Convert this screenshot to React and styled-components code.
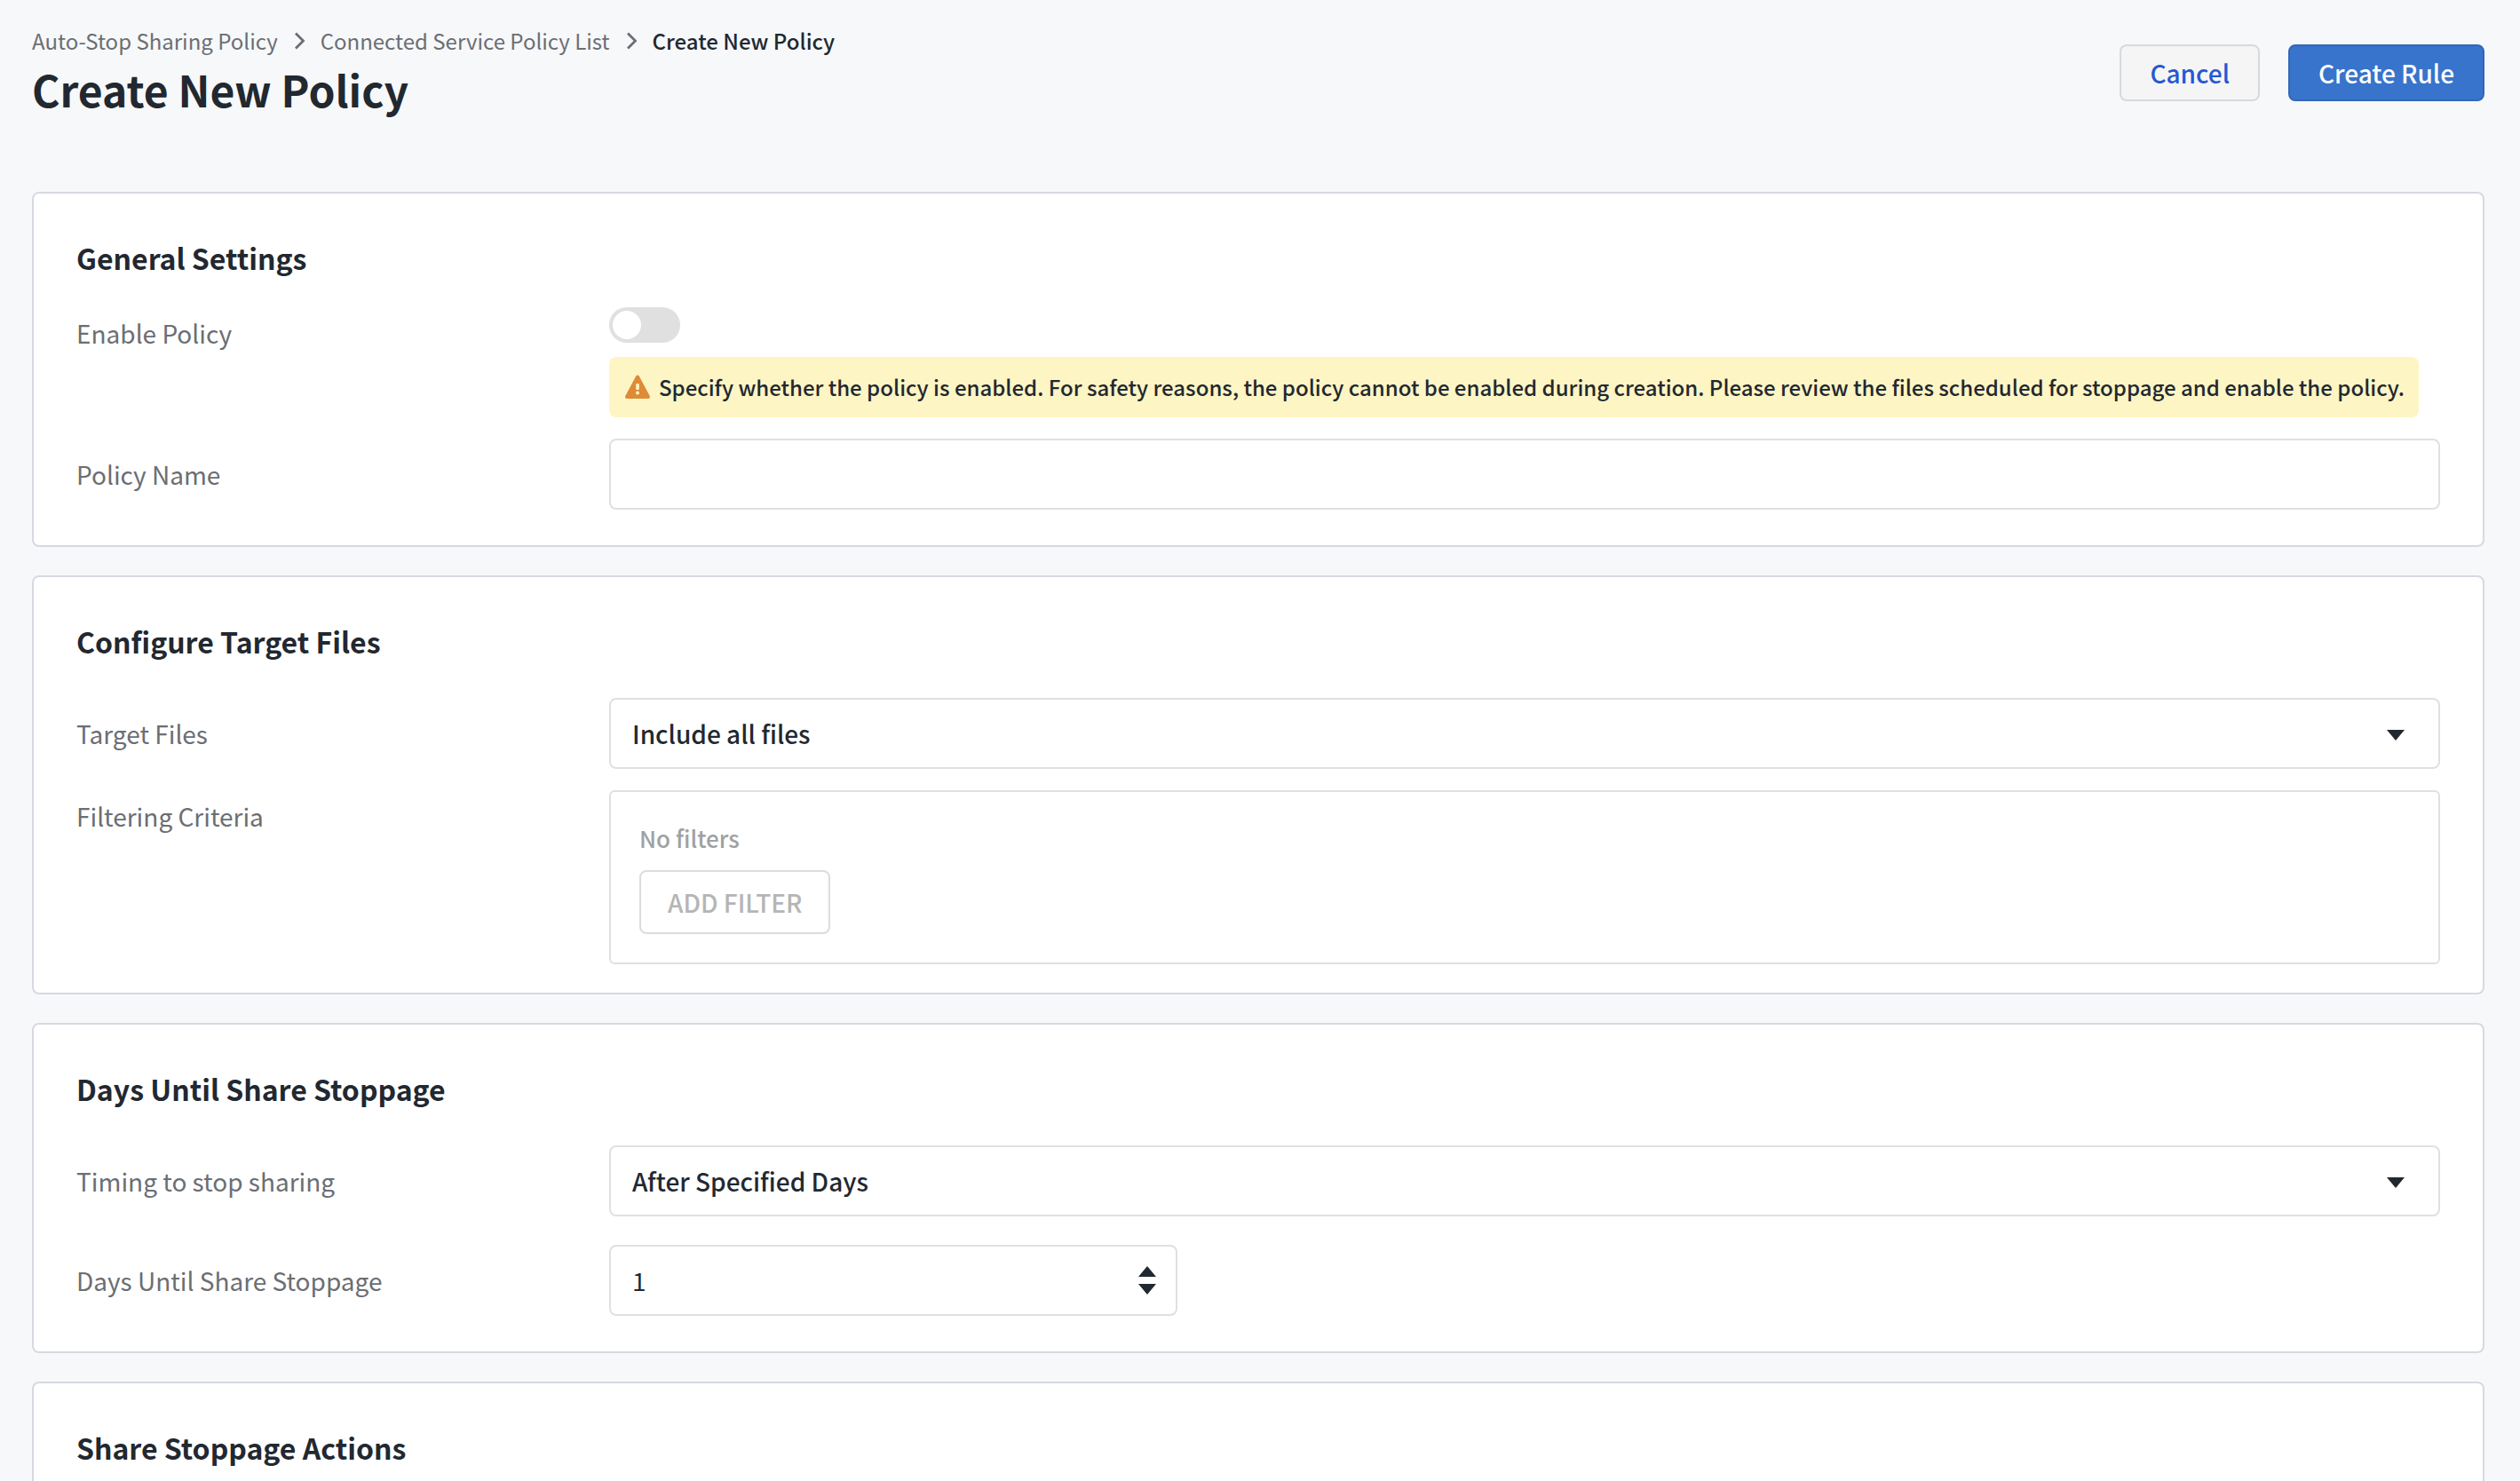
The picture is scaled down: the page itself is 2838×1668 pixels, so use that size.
import { useState } from "react";
import styled, { createGlobalStyle } from "styled-components";

const colors = {
  page: "#f7f8fa",
  panel: "#ffffff",
  panelBorder: "#d7d9e2",
  fieldBorder: "#e0e0e0",
  text: "#222830",
  label: "#6b6e73",
  muted: "#a0a1a3",
  disabled: "#b5b5b5",
  primary: "#3874cb",
  primaryBorder: "#3267b5",
  link: "#2458d3",
  notice: "#fef5c4",
  warning: "#dd8b37",
};

const GlobalStyle = createGlobalStyle`
  *, *::before, *::after {
    box-sizing: border-box;
  }

  body {
    margin: 0;
    background-color: ${colors.page};
    color: ${colors.text};
    font-family: "Noto Sans CJK JP", "Noto Sans", sans-serif;
    font-size: 28px;
    line-height: 40px;
  }

  button, input, select {
    font: inherit;
    color: inherit;
  }
`;

const Page = styled.div`
  padding: 28px 40px 40px 36px;
`;

const PageHeader = styled.header`
  display: flex;
  justify-content: space-between;
  align-items: flex-start;
  min-height: 188px;
`;

const Breadcrumb = styled.nav`
  display: flex;
  align-items: center;
  gap: 14px;
  font-size: 24px;
  line-height: 36px;
`;

const Crumb = styled.a`
  color: ${colors.label};
  text-decoration: none;
`;

const CurrentCrumb = styled.span`
  font-weight: 500;
`;

const PageTitle = styled.h1`
  margin: 0;
  font-size: 48px;
  line-height: 72px;
  font-weight: 700;
`;

const HeaderActions = styled.div`
  display: flex;
  gap: 32px;
  padding-top: 22px;
`;

const Button = styled.button`
  height: 64px;
  padding: 0 32px;
  border: 2px solid
    ${(props) => (props.$primary ? colors.primaryBorder : "#d9d9d9")};
  border-radius: 8px;
  background-color: ${(props) => (props.$primary ? colors.primary : "#f5f5f5")};
  color: ${(props) => (props.$primary ? "#ffffff" : colors.link)};
  font-weight: 500;
  cursor: pointer;
`;

const Panels = styled.main`
  display: flex;
  flex-direction: column;
  gap: 32px;
`;

const Panel = styled.section`
  padding: 48px 48px ${(props) => (props.$compact ? 32 : 40)}px;
  border: 2px solid ${colors.panelBorder};
  border-radius: 8px;
  background-color: ${colors.panel};
`;

const PanelTitle = styled.h2`
  margin: 0 0 ${(props) => (props.$compact ? 32 : 40)}px;
  font-size: 32px;
  line-height: 48px;
  font-weight: 700;
`;

const Rows = styled.div`
  display: flex;
  flex-direction: column;
  gap: ${(props) => (props.$wide ? 32 : 24)}px;
`;

const Row = styled.div`
  display: grid;
  grid-template-columns: 600px minmax(0, 1fr);
  align-items: ${(props) => (props.$top ? "start" : "center")};
`;

const Label = styled.label`
  padding-top: ${(props) => (props.$top ? 9 : 0)}px;
  color: ${colors.label};
`;

const ToggleCell = styled.div`
  display: flex;
  flex-direction: column;
  align-items: flex-start;
  gap: 16px;
`;

const Toggle = styled.input`
  appearance: none;
  display: flex;
  width: 80px;
  height: 40px;
  margin: 0;
  padding: 4px;
  border-radius: 20px;
  background-color: ${colors.fieldBorder};

  &::before {
    content: "";
    width: 32px;
    height: 32px;
    border-radius: 50%;
    background-color: #ffffff;
  }
`;

const Notice = styled.p`
  display: flex;
  align-items: center;
  gap: 8px;
  margin: 0;
  padding: 16px;
  border-radius: 8px;
  background-color: ${colors.notice};
  font-size: 24px;
  line-height: 36px;
  font-weight: 500;
`;

const TextInput = styled.input`
  width: 100%;
  height: 80px;
  padding: 0 24px;
  border: 2px solid ${colors.fieldBorder};
  border-radius: 8px;
  background-color: #ffffff;
`;

const SelectBox = styled.div`
  position: relative;
`;

const SelectInput = styled.select`
  appearance: none;
  display: block;
  width: 100%;
  height: 80px;
  padding: 0 80px 0 24px;
  border: 2px solid ${colors.fieldBorder};
  border-radius: 8px;
  background-color: #ffffff;
  font-weight: 500;
`;

const SelectCaret = styled.svg`
  position: absolute;
  top: 36px;
  right: 40px;
  pointer-events: none;
`;

const NumberBox = styled.div`
  display: flex;
  align-items: center;
  width: 640px;
  height: 80px;
  padding: 0 22px 0 24px;
  border: 2px solid ${colors.fieldBorder};
  border-radius: 8px;
`;

const NumberInput = styled.input`
  appearance: textfield;
  flex: 1;
  min-width: 0;
  padding: 0;
  border: 0;
  outline: 0;
  background: none;

  &::-webkit-inner-spin-button {
    appearance: none;
  }
`;

const Stepper = styled.div`
  display: flex;
  flex-direction: column;
  gap: 8px;
`;

const StepButton = styled.button`
  display: block;
  padding: 0;
  border: 0;
  background: none;
  line-height: 0;
  cursor: pointer;
`;

const FilterBox = styled.div`
  display: flex;
  flex-direction: column;
  align-items: flex-start;
  gap: 16px;
  padding: 32px;
  border: 2px solid ${colors.fieldBorder};
  border-radius: 6px;
`;

const FilterEmpty = styled.span`
  color: ${colors.muted};
  font-size: 26px;
  font-weight: 500;
`;

const FilterButton = styled.button`
  height: 72px;
  padding: 0 30px;
  border: 2px solid #dcdcdc;
  border-radius: 8px;
  background-color: #ffffff;
  font-weight: 500;

  &:disabled {
    color: ${colors.disabled};
  }
`;

const Chevron = () => (
  <svg width="20" height="20" viewBox="0 0 20 20" fill="none">
    <path d="M6 1.5L14.5 10L6 18.5" stroke={colors.label} strokeWidth="2.8" />
  </svg>
);

const WarningIcon = () => (
  <svg width="32" height="32" viewBox="0 0 32 32">
    <path
      d="M16 4.5L28 27H4Z"
      fill={colors.warning}
      stroke={colors.warning}
      strokeWidth="4"
      strokeLinejoin="round"
    />
    <rect x="14.2" y="12" width="3.6" height="7" rx="1" fill={colors.notice} />
    <circle cx="16" cy="22.4" r="2" fill={colors.notice} />
  </svg>
);

const TriangleUp = () => (
  <svg width="20" height="12" viewBox="0 0 20 12">
    <path d="M0 12L10 0L20 12Z" fill={colors.text} />
  </svg>
);

const TriangleDown = () => (
  <svg width="20" height="12" viewBox="0 0 20 12">
    <path d="M0 0L10 12L20 0Z" fill={colors.text} />
  </svg>
);

const Select = ({ id, options }) => (
  <SelectBox>
    <SelectInput id={id}>
      {options.map((option) => (
        <option key={option}>{option}</option>
      ))}
    </SelectInput>
    <SelectCaret width="20" height="12" viewBox="0 0 20 12">
      <path d="M0 0L10 12L20 0Z" fill={colors.text} />
    </SelectCaret>
  </SelectBox>
);

export default function App() {
  const [name, setName] = useState("");
  const [days, setDays] = useState(1);

  return (
    <>
      <GlobalStyle />
      <Page>
        <PageHeader>
          <div>
            <Breadcrumb>
              <Crumb href="#policy">Auto-Stop Sharing Policy</Crumb>
              <Chevron />
              <Crumb href="#list">Connected Service Policy List</Crumb>
              <Chevron />
              <CurrentCrumb>Create New Policy</CurrentCrumb>
            </Breadcrumb>
            <PageTitle>Create New Policy</PageTitle>
          </div>
          <HeaderActions>
            <Button type="button">Cancel</Button>
            <Button type="button" $primary>
              Create Rule
            </Button>
          </HeaderActions>
        </PageHeader>

        <Panels>
          <Panel>
            <PanelTitle $compact>General Settings</PanelTitle>
            <Rows>
              <Row $top>
                <Label $top htmlFor="enable">
                  Enable Policy
                </Label>
                <ToggleCell>
                  <Toggle id="enable" type="checkbox" role="switch" disabled />
                  <Notice>
                    <WarningIcon />
                    Specify whether the policy is enabled. For safety reasons,
                    the policy cannot be enabled during creation. Please review
                    the files scheduled for stoppage and enable the policy.
                  </Notice>
                </ToggleCell>
              </Row>
              <Row>
                <Label htmlFor="name">Policy Name</Label>
                <TextInput
                  id="name"
                  type="text"
                  value={name}
                  onChange={(e) => setName(e.target.value)}
                />
              </Row>
            </Rows>
          </Panel>

          <Panel $compact>
            <PanelTitle>Configure Target Files</PanelTitle>
            <Rows>
              <Row>
                <Label htmlFor="target">Target Files</Label>
                <Select id="target" options={["Include all files"]} />
              </Row>
              <Row $top>
                <Label $top htmlFor="filter">
                  Filtering Criteria
                </Label>
                <FilterBox>
                  <FilterEmpty>No filters</FilterEmpty>
                  <FilterButton id="filter" type="button" disabled>
                    ADD FILTER
                  </FilterButton>
                </FilterBox>
              </Row>
            </Rows>
          </Panel>

          <Panel>
            <PanelTitle>Days Until Share Stoppage</PanelTitle>
            <Rows $wide>
              <Row>
                <Label htmlFor="timing">Timing to stop sharing</Label>
                <Select id="timing" options={["After Specified Days"]} />
              </Row>
              <Row>
                <Label htmlFor="days">Days Until Share Stoppage</Label>
                <NumberBox>
                  <NumberInput
                    id="days"
                    type="number"
                    min="1"
                    value={days}
                    onChange={(e) => setDays(Number(e.target.value))}
                  />
                  <Stepper>
                    <StepButton
                      type="button"
                      aria-label="Increase"
                      onClick={() => setDays(days + 1)}
                    >
                      <TriangleUp />
                    </StepButton>
                    <StepButton
                      type="button"
                      aria-label="Decrease"
                      onClick={() => setDays(Math.max(1, days - 1))}
                    >
                      <TriangleDown />
                    </StepButton>
                  </Stepper>
                </NumberBox>
              </Row>
            </Rows>
          </Panel>

          <Panel>
            <PanelTitle>Share Stoppage Actions</PanelTitle>
          </Panel>
        </Panels>
      </Page>
    </>
  );
}
